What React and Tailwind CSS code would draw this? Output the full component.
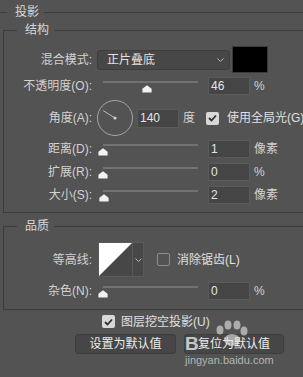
import React from "react";

const TRACK_W = 95;

function Thumb({ pos }) {
  const left = Math.round((pos / 100) * TRACK_W) - 5;
  return (
    <svg
      className="absolute top-[8px]"
      style={{ left }}
      width="10"
      height="8"
      viewBox="0 0 10 8"
    >
      <path d="M5 0.3 L9.6 3.8 L9.6 7.6 L0.4 7.6 L0.4 3.8 Z" fill="#f2f2f2" />
    </svg>
  );
}

function Slider({ pos }) {
  return (
    <div className="relative ml-[11px] h-full w-[95px] shrink-0">
      <div className="absolute left-0 top-[4px] h-[2px] w-full bg-[#727272]"></div>
      <Thumb pos={pos} />
    </div>
  );
}

function NumField({ value, className = "" }) {
  return (
    <div
      className={`flex h-[18px] w-[42px] shrink-0 items-center border border-[#5a5a5a] bg-[#454545] pl-[2px] text-[12px] text-[#e4e4e4] ${className}`}
    >
      {value}
    </div>
  );
}

function Label({ children }) {
  return (
    <div className="w-[88px] shrink-0 whitespace-nowrap text-right text-[12px] text-[#d2d2d2]">
      {children}
    </div>
  );
}

function SliderRow({ label, value, pos, unit, mt }) {
  return (
    <div className={`flex h-[18px] items-center ${mt}`}>
      <Label>{label}</Label>
      <Slider pos={pos} />
      <NumField value={value} className="ml-[10px]" />
      <div className="ml-[4px] text-[12px] text-[#d2d2d2]">{unit}</div>
    </div>
  );
}

function CheckBox({ checked }) {
  if (!checked) {
    return (
      <div className="h-[13px] w-[13px] shrink-0 rounded-[2px] border border-[#8c8c8c]"></div>
    );
  }
  return (
    <div className="flex h-[13px] w-[13px] shrink-0 items-center justify-center rounded-[2px] bg-[#d8d8d8]">
      <svg width="9" height="8" viewBox="0 0 9 8">
        <path d="M1 4 L3.5 6.5 L8 1.5" fill="none" stroke="#2e2e2e" strokeWidth="1.8" />
      </svg>
    </div>
  );
}

function Chevron() {
  return (
    <svg width="7" height="4" viewBox="0 0 7 4">
      <path d="M0.5 0.5 L3.5 3.5 L6.5 0.5" fill="none" stroke="#b4b4b4" strokeWidth="1" />
    </svg>
  );
}

function Group({ title, children, className = "" }) {
  return (
    <fieldset
      className={`ml-[3px] w-[320px] border border-[#3c3c3c] pb-[8px] ${className}`}
    >
      <legend className="ml-[13px] pl-[8px] pr-[5px] text-[12px] leading-[12px] text-[#d8d8d8]">
        {title}
      </legend>
      {children}
    </fieldset>
  );
}

function Dial({ angle }) {
  const r = (angle * Math.PI) / 180;
  const x2 = 18 + Math.cos(r) * 14;
  const y2 = 18 - Math.sin(r) * 14;
  return (
    <svg className="ml-[5px] shrink-0" width="36" height="36" viewBox="0 0 36 36">
      <circle cx="18" cy="18" r="17.5" fill="none" stroke="#a6a6a6" strokeWidth="1" />
      <line x1="18" y1="18" x2={x2} y2={y2} stroke="#bdbdbd" strokeWidth="1" />
      <circle cx="18" cy="18" r="1.6" fill="#d0d0d0" />
    </svg>
  );
}

export default function App() {
  return (
    <div className="relative h-[377px] w-[303px] overflow-hidden bg-[#535353] font-[Liberation_Sans,Noto_Sans_CJK_SC,sans-serif]">
      {/* Header */}
      <div className="flex h-[24px] items-center">
        <div className="h-px w-[7px] bg-[#3c3c3c]"></div>
        <div className="px-[8px] pr-[5px] text-[12px] text-[#d8d8d8]">投影</div>
        <div className="h-px flex-1 bg-[#3c3c3c]"></div>
      </div>

      {/* 结构 */}
      <Group title="结构">
        <div className="mt-[10px] flex h-[27px] items-center">
          <Label>混合模式:</Label>
          <div className="ml-[5px] flex h-[20px] w-[133px] shrink-0 items-center justify-between rounded-[3px] border border-[#3e3e3e] bg-[#474747] pl-[9px] pr-[5px] text-[12px] text-[#e2e2e2]">
            <span>正片叠底</span>
            <Chevron />
          </div>
          <div className="ml-[2px] h-[27px] w-[36px] shrink-0 border border-[#3a3a3a] bg-black"></div>
        </div>

        <SliderRow label="不透明度(O):" value={46} pos={46} unit="%" mt="mt-[4px]" />

        <div className="mt-[5px] flex h-[36px] items-center">
          <Label>角度(A):</Label>
          <Dial angle={148} />
          <NumField value={140} className="ml-[4px] h-[19px]" />
          <div className="ml-[4px] text-[12px] text-[#d2d2d2]">度</div>
          <div className="ml-[11px]">
            <CheckBox checked />
          </div>
          <div className="ml-[8px] whitespace-nowrap text-[12px] text-[#e0e0e0]">
            使用全局光(G)
          </div>
        </div>

        <SliderRow label="距离(D):" value={1} pos={0.5} unit="像素" mt="mt-[4px]" />
        <SliderRow label="扩展(R):" value={0} pos={0} unit="%" mt="mt-[5px]" />
        <SliderRow label="大小(S):" value={2} pos={1} unit="像素" mt="mt-[5px]" />
      </Group>

      {/* 品质 */}
      <Group title="品质" className="mt-[7px] !pb-[9px]">
        <div className="mt-[10px] flex h-[35px] items-center">
          <Label>等高线:</Label>
          <div className="ml-[6px] flex h-[35px] w-[46px] shrink-0 border border-[#5a5a5a] bg-[#474747]">
            <svg width="33" height="33" viewBox="0 0 33 33" className="shrink-0">
              <polygon points="0,0 33,0 0,33" fill="#ffffff" />
            </svg>
            <div className="flex flex-1 items-center justify-center border-l border-[#5a5a5a]">
              <Chevron />
            </div>
          </div>
          <div className="ml-[13px]">
            <CheckBox checked={false} />
          </div>
          <div className="ml-[7px] whitespace-nowrap text-[12px] text-[#e0e0e0]">
            消除锯齿(L)
          </div>
        </div>

        <SliderRow label="杂色(N):" value={0} pos={0} unit="%" mt="mt-[5px]" />
      </Group>

      {/* Knockout + buttons */}
      <div className="ml-[102px] mt-[5px] flex h-[13px] items-center">
        <CheckBox checked />
        <div className="ml-[6px] whitespace-nowrap text-[12px] text-[#e0e0e0]">
          图层挖空投影(U)
        </div>
      </div>
      <div className="ml-[75px] mt-[6px] flex gap-[8px]">
        <button className="h-[20px] w-[101px] rounded-[3px] border border-[#3e3e3e] bg-[#464646] text-[12px] text-[#ececec]">
          设置为默认值
        </button>
        <button className="h-[20px] w-[100px] rounded-[3px] border border-[#3e3e3e] bg-[#464646] text-[12px] text-[#ececec]">
          复位为默认值
        </button>
      </div>

      {/* watermark */}
      <div className="pointer-events-none absolute left-[184px] top-[320px]">
        <svg width="45" height="30" viewBox="0 0 45 30" className="absolute left-[28px] top-0 opacity-60">
          <ellipse cx="8" cy="10" rx="3.5" ry="4.5" fill="#e8e8e8" />
          <ellipse cx="16" cy="5" rx="3.5" ry="4.5" fill="#e8e8e8" />
          <ellipse cx="25" cy="5" rx="3.5" ry="4.5" fill="#e8e8e8" />
          <ellipse cx="32" cy="11" rx="3.5" ry="4.5" fill="#e8e8e8" />
          <ellipse cx="20" cy="20" rx="8" ry="6" fill="#e8e8e8" />
        </svg>
        <div className="absolute left-[1px] top-[14px] text-[19px] font-bold leading-[19px] text-[#e6e6e6] opacity-80">
          B
        </div>
        <div className="absolute left-[1px] top-[34px] whitespace-nowrap text-[11px] leading-[12px] text-[#b4b4b4]">
          jingyan.baidu.com
        </div>
      </div>
    </div>
  );
}
